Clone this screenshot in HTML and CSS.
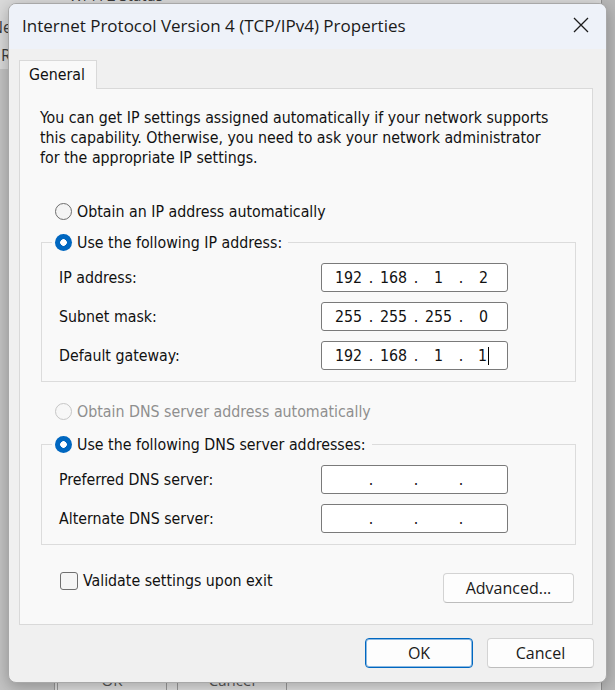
FILE: index.html
```html
<!DOCTYPE html>
<html lang="en">
<head>
    <meta charset="UTF-8">
    <title>Internet Protocol Version 4 (TCP/IPv4) Properties</title>
    <link rel="stylesheet" href="styles.css">
</head>
<body>
<div class="desktop">

    <!-- Wi-Fi status window sitting behind the dialog -->
    <div class="back-window">
        <div class="back-title">Wi-Fi 2 Status</div>
        <div class="back-line">Net</div>
        <div class="back-line second">R</div>
        <div class="back-footer">
            <span class="back-btn">OK</span>
            <span class="back-btn">Cancel</span>
        </div>
    </div>

    <div class="dialog">
        <div class="titlebar">
            <span class="title">Internet Protocol Version 4 (TCP/IPv4) Properties</span>
            <svg class="close" width="16" height="16" viewBox="0 0 16 16">
                <path d="M1 1 L15 15 M15 1 L1 15" stroke="#1c1c1c" stroke-width="1.3" fill="none"/>
            </svg>
        </div>

        <div class="dialog-body">
            <div class="tabs"><div class="tab">General</div></div>

            <div class="panel">
                <p class="intro">You can get IP settings assigned automatically if your network supports<br>this capability. Otherwise, you need to ask your network administrator<br>for the appropriate IP settings.</p>

                <div class="option"><span class="radio"></span>Obtain an IP address automatically</div>

                <div class="group">
                    <div class="legend"><span class="radio checked"></span>Use the following IP address:</div>
                    <div class="rows">
                        <div class="field">
                            <span class="label">IP address:</span>
                            <div class="ip"><span>192</span><i>.</i><span>168</span><i>.</i><span>1</span><i>.</i><span>2</span></div>
                        </div>
                        <div class="field">
                            <span class="label">Subnet mask:</span>
                            <div class="ip"><span>255</span><i>.</i><span>255</span><i>.</i><span>255</span><i>.</i><span>0</span></div>
                        </div>
                        <div class="field">
                            <span class="label">Default gateway:</span>
                            <div class="ip"><span>192</span><i>.</i><span>168</span><i>.</i><span>1</span><i>.</i><span>1<b class="caret"></b></span></div>
                        </div>
                    </div>
                </div>

                <div class="option dns disabled"><span class="radio"></span>Obtain DNS server address automatically</div>

                <div class="group dns-group">
                    <div class="legend"><span class="radio checked"></span>Use the following DNS server addresses:</div>
                    <div class="rows">
                        <div class="field">
                            <span class="label">Preferred DNS server:</span>
                            <div class="ip"><span></span><i>.</i><span></span><i>.</i><span></span><i>.</i><span></span></div>
                        </div>
                        <div class="field">
                            <span class="label">Alternate DNS server:</span>
                            <div class="ip"><span></span><i>.</i><span></span><i>.</i><span></span><i>.</i><span></span></div>
                        </div>
                    </div>
                </div>

                <div class="bottom-row">
                    <div class="check"><span class="box"></span>Validate settings upon exit</div>
                    <button class="btn advanced">Advanced...</button>
                </div>
            </div>

            <div class="footer">
                <button class="btn ok">OK</button>
                <button class="btn cancel">Cancel</button>
            </div>
        </div>
    </div>

</div>
</body>
</html>
```

FILE: styles.css
```css
body {
    margin: 0;
    background-color: #b8b8b8;
    font-family: 'DejaVu Sans Condensed', 'DejaVu Sans', sans-serif;
    font-size: 15.8px;
    color: #111;
}
.desktop {
    position: relative;
    width: 615px;
    height: 690px;
    overflow: hidden;
}

/* window in the background */
.back-window {
    position: absolute;
    left: -300px;
    top: -16px;
    width: 900px;
    height: 720px;
    display: flex;
    flex-direction: column;
    background: linear-gradient(to bottom, #dadada 0, #dadada 84px, #c4c4c4 84px);
    border: 1px solid #8e8e8e;
    font-family: 'Open Sans', sans-serif;
    color: #3a3a3a;
}
.back-title {
    padding: 0 0 0 368px;
    height: 20px;
    font-size: 15px;
    line-height: 20px;
}
.back-line {
    margin: 12px 0 0 290px;
    font-size: 16px;
    line-height: 20px;
}
.back-line.second {
    margin: 8px 0 0 300px;
}
.back-footer {
    margin: auto 0 0 353px;
    height: 44px;
    display: flex;
    gap: 10px;
    padding: 3px 0 0 2px;
    box-sizing: border-box;
    background-color: #e2e2e2;
    border-left: 1px solid #9a9a9a;
}
.back-btn {
    width: 108px;
    height: 30px;
    border: 1px solid #9c9c9c;
    text-align: center;
    line-height: 30px;
    font-size: 15px;
    color: #555;
}

/* the dialog */
.dialog {
    position: absolute;
    left: 8px;
    top: 3px;
    width: 599px;
    height: 680px;
    box-sizing: border-box;
    display: flex;
    flex-direction: column;
    background-color: #f0f0f0;
    border: 1px solid #a8a8a8;
    border-radius: 8px;
    box-shadow: 0 4px 16px rgba(0, 0, 0, 0.28);
    overflow: hidden;
}
.titlebar {
    height: 45px;
    box-sizing: border-box;
    flex-shrink: 0;
    display: flex;
    align-items: center;
    justify-content: space-between;
    padding: 0 17px 3px 13px;
    background-color: #eef2f9;
}
.title {
    font-family: 'Open Sans', sans-serif;
    font-size: 17px;
    color: #1a1a1a;
}
.close {
    display: block;
}
.dialog-body {
    padding: 11px 13px 0 10px;
}
.tabs {
    display: flex;
}
.tab {
    position: relative;
    width: 78px;
    height: 29px;
    box-sizing: border-box;
    padding-left: 9px;
    margin-bottom: -1px;
    line-height: 28px;
    background-color: #f9f9f9;
    border: 1px solid #d9d9d9;
    border-bottom: none;
}
.panel {
    background-color: #f9f9f9;
    border: 1px solid #d9d9d9;
    padding: 19px 16px 21px 21px;
}
.intro {
    margin: 0 0 0 -1px;
    line-height: 20px;
}
.option {
    display: flex;
    align-items: center;
    height: 20px;
    margin: 33px 0 0 14px;
}
.option.dns {
    margin-top: 19px;
}
.option.disabled {
    color: #8f8f8f;
}
.radio {
    width: 17px;
    height: 17px;
    box-sizing: border-box;
    margin-right: 5px;
    border: 1px solid #6e6e6e;
    border-radius: 50%;
    background-color: #f4f4f4;
}
.radio.checked {
    border: none;
    background: radial-gradient(circle, #ffffff 0, #ffffff 3px, #0067c0 3.6px);
}
.disabled .radio {
    border-color: #c6c6c6;
    background-color: #f7f7f7;
}

/* group boxes */
.group {
    margin-top: 21px;
    border: 1px solid #dcdcdc;
    padding: 0 0 11px 17px;
}
.dns-group {
    margin-top: 23px;
}
.legend {
    display: flex;
    align-items: center;
    width: fit-content;
    height: 20px;
    margin: -11px 0 0 -7px;
    padding: 0 6px 0 3px;
    background-color: #f9f9f9;
}
.rows {
    display: flex;
    flex-direction: column;
    gap: 10px;
    margin-top: 11px;
}
.field {
    display: flex;
    align-items: center;
    height: 29px;
}
.label {
    width: 262px;
}
.ip {
    width: 187px;
    height: 29px;
    box-sizing: border-box;
    display: grid;
    grid-template-columns: 37px 8px 37px 8px 37px 8px 37px;
    align-items: center;
    padding-left: 8px;
    text-align: center;
    background-color: #fff;
    border: 1px solid #7a7a7a;
    border-radius: 3px;
}
.ip i {
    font-style: normal;
}
.caret {
    display: inline-block;
    width: 1px;
    height: 18px;
    margin-left: 1px;
    vertical-align: -4px;
    background-color: #000;
}

.bottom-row {
    display: flex;
    justify-content: space-between;
    align-items: flex-start;
    margin-top: 26px;
}
.check {
    display: flex;
    align-items: center;
    height: 19px;
    margin-left: 19px;
}
.box {
    width: 18px;
    height: 18px;
    box-sizing: border-box;
    margin-right: 5px;
    border: 1px solid #6f6f6f;
    border-radius: 3px;
    background-color: #f5f5f5;
}

.btn {
    height: 30px;
    padding: 0;
    font-family: 'Open Sans', sans-serif;
    font-size: 16px;
    color: #1a1a1a;
    background-color: #fdfdfd;
    border: 1px solid #d3d3d3;
    border-bottom-color: #bdbdbd;
    border-radius: 4px;
}
.advanced {
    width: 131px;
    margin: 2px 2px 0 0;
}
.footer {
    display: flex;
    justify-content: flex-end;
    gap: 14px;
    margin: 13px -1px 0 0;
}
.ok {
    width: 108px;
    border-color: #0067c0;
    box-shadow: inset 0 0 0 1px rgba(0, 103, 192, 0.45);
}
.cancel {
    width: 107px;
}
```
